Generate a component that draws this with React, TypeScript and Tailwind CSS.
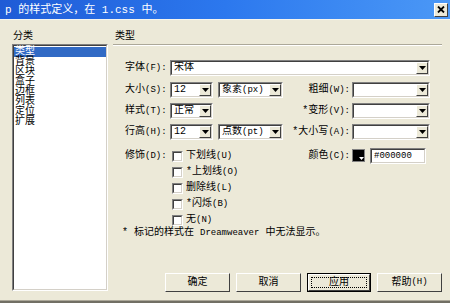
const Sunken = ({ className = "", children }: { className?: string; children?: React.ReactNode }) => (
  <div className={`border border-t-[#808080] border-l-[#808080] border-b-white border-r-white ${className}`}>
    <div className="h-full flex items-center bg-white border border-t-[#404040] border-l-[#404040] border-b-[#d4d0c8] border-r-[#d4d0c8]">
      {children}
    </div>
  </div>
);

const Arrow = () => (
  <div className="h-full w-[12px] shrink-0 flex items-center justify-center bg-[#ECE9D8] border border-t-white border-l-white border-b-[#404040] border-r-[#404040]">
    <svg width="7" height="4" viewBox="0 0 7 4">
      <path d="M0 0h7L3.5 4z" fill="#000" />
    </svg>
  </div>
);

const Combo = ({ value, className = "" }: { value?: React.ReactNode; className?: string }) => (
  <Sunken className={`h-[16px] shrink-0 ${className}`}>
    <span className="flex-1 pl-[2px] leading-[12px] whitespace-nowrap overflow-hidden">{value}</span>
    <Arrow />
  </Sunken>
);

// CJK text with a small latin access key, e.g. 字体(F):
const Lbl = ({ text, k, colon = true }: { text: string; k: string; colon?: boolean }) => (
  <>
    {text}
    <span className="text-[9px]">
      ({k}){colon ? ":" : ""}
    </span>
  </>
);

const Check = ({ text, k }: { text: string; k: string }) => (
  <div className="h-[16px] flex items-center">
    <Sunken className="w-[11px] h-[11px]" />
    <span className="ml-[3px] leading-[12px] whitespace-nowrap">
      <Lbl text={text} k={k} colon={false} />
    </span>
  </div>
);

const Button = ({ label, focused }: { label: React.ReactNode; focused?: boolean }) =>
  focused ? (
    <div className="w-[64px] h-[19px] border border-black">
      <div className="h-full flex items-center justify-center border border-t-white border-l-white border-b-[#404040] border-r-[#404040] px-[2px] py-[2px]">
        <div className="h-full w-full flex items-center justify-center border border-dotted border-black">{label}</div>
      </div>
    </div>
  ) : (
    <div className="w-[65px] h-[19px] flex items-center justify-center bg-[#ECE9D8] border border-t-white border-l-white border-b-[#404040] border-r-[#404040]">
      {label}
    </div>
  );

const categories = ["类型", "背景", "区块", "盒子", "边框", "列表", "定位", "扩展"];

export default function App() {
  return (
    <div className="w-[450px] h-[303px] bg-[#ECE9D8] flex flex-col overflow-hidden text-[10px] text-black [font-family:'Liberation_Mono','Noto_Sans_CJK_SC',monospace]">
      {/* title bar */}
      <div className="h-[19px] shrink-0 flex items-center justify-between pl-[5px] pr-[2px] bg-linear-to-r from-[#1f5bd6] via-[#2c78ee] to-[#4b98f6]">
        <span className="text-white text-[11px] leading-[12px] whitespace-nowrap">p 的样式定义，在 1.css 中。</span>
        <div className="w-[14px] h-[14px] flex items-center justify-center bg-[#ECE9D8] border border-t-white border-l-white border-b-[#404040] border-r-[#404040]">
          <svg width="8" height="7" viewBox="0 0 8 7">
            <path d="M1 0.5l6 6M7 0.5l-6 6" stroke="#000" strokeWidth="1.8" />
          </svg>
        </div>
      </div>
      <div className="h-[1px] shrink-0 bg-[#f6f5ee]" />

      <div className="flex flex-1 min-h-0 pl-[12px] pr-[8px] pt-[10px] pb-[9px]">
        {/* category list */}
        <div className="w-[96px] flex flex-col shrink-0">
          <div className="h-[14px] leading-[14px] pl-[1px]">分类</div>
          <Sunken className="flex-1">
            <div className="self-stretch w-full flex flex-col pt-[1px]">
              {categories.map((c, i) => (
                <div
                  key={c}
                  className={`h-[10px] leading-[10px] pl-[1px] ${i === 0 ? "bg-[#316AC5] text-white" : ""}`}
                >
                  {c}
                </div>
              ))}
            </div>
          </Sunken>
        </div>

        {/* type panel */}
        <div className="ml-[5px] flex-1 flex flex-col">
          <div className="h-[14px] leading-[14px] pl-[2px]">类型</div>
          <div className="h-[2px] border-t border-t-[#aca899] border-b border-b-white" />

          <div className="mt-[14px] pl-[12px] pr-[12px] flex flex-col">
            <div className="flex items-center h-[16px]">
              <span className="w-[45px] shrink-0 whitespace-nowrap"><Lbl text="字体" k="F" /></span>
              <Combo value="宋体" className="flex-1" />
            </div>
            <div className="flex items-center h-[16px] mt-[6px]">
              <span className="w-[45px] shrink-0 whitespace-nowrap"><Lbl text="大小" k="S" /></span>
              <Combo value="12" className="w-[43px]" />
              <Combo value={<>象素<span className="text-[9px]">(px)</span></>} className="w-[65px] ml-[5px]" />
              <span className="flex-1 text-right pr-[2px] whitespace-nowrap"><Lbl text="粗细" k="W" /></span>
              <Combo className="w-[78px]" />
            </div>
            <div className="flex items-center h-[16px] mt-[5px]">
              <span className="w-[45px] shrink-0 whitespace-nowrap"><Lbl text="样式" k="T" /></span>
              <Combo value="正常" className="w-[43px]" />
              <span className="flex-1 text-right pr-[2px] whitespace-nowrap"><Lbl text="*变形" k="V" /></span>
              <Combo className="w-[78px]" />
            </div>
            <div className="flex items-center h-[16px] mt-[5px]">
              <span className="w-[45px] shrink-0 whitespace-nowrap"><Lbl text="行高" k="H" /></span>
              <Combo value="12" className="w-[43px]" />
              <Combo value={<>点数<span className="text-[9px]">(pt)</span></>} className="w-[65px] ml-[5px]" />
              <span className="flex-1 text-right pr-[2px] whitespace-nowrap"><Lbl text="*大小写" k="A" /></span>
              <Combo className="w-[78px]" />
            </div>

            <div className="flex mt-[8px]">
              <span className="w-[45px] shrink-0 h-[16px] leading-[16px] whitespace-nowrap"><Lbl text="修饰" k="D" /></span>
              <div className="flex flex-col ml-[2px]">
                <Check text="下划线" k="U" />
                <Check text="*上划线" k="O" />
                <Check text="删除线" k="L" />
                <Check text="*闪烁" k="B" />
                <Check text="无" k="N" />
              </div>
              <div className="flex-1 flex items-start justify-end pr-[4px]">
                <span className="h-[16px] leading-[16px] pr-[2px] whitespace-nowrap"><Lbl text="颜色" k="C" /></span>
                <div className="relative mt-[1px] w-[13px] h-[13px] bg-black border border-[#808080]">
                  <svg className="absolute right-0 bottom-0" width="5" height="4" viewBox="0 0 5 4">
                    <path d="M0 0h5L2.5 3z" fill="#fff" />
                  </svg>
                </div>
                <Sunken className="w-[56px] h-[16px] ml-[5px]">
                  <span className="pl-[2px] leading-[12px] text-[9px]">#000000</span>
                </Sunken>
              </div>
            </div>
            <div className="h-[10px] leading-[10px] -ml-[3px] whitespace-nowrap">
              * 标记的样式在 <span className="text-[9px]">Dreamweaver</span> 中无法显示。
            </div>
          </div>

          <div className="mt-auto -mb-[1px] flex justify-end gap-[6px]">
            <Button label="确定" />
            <Button label="取消" />
            <Button label="应用" focused />
            <Button label={<>帮助<span className="text-[9px]">(H)</span></>} />
          </div>
        </div>
      </div>
      <div className="h-[3px] shrink-0 border-t border-t-[#aca899] bg-[#716f64]" />
    </div>
  );
}
